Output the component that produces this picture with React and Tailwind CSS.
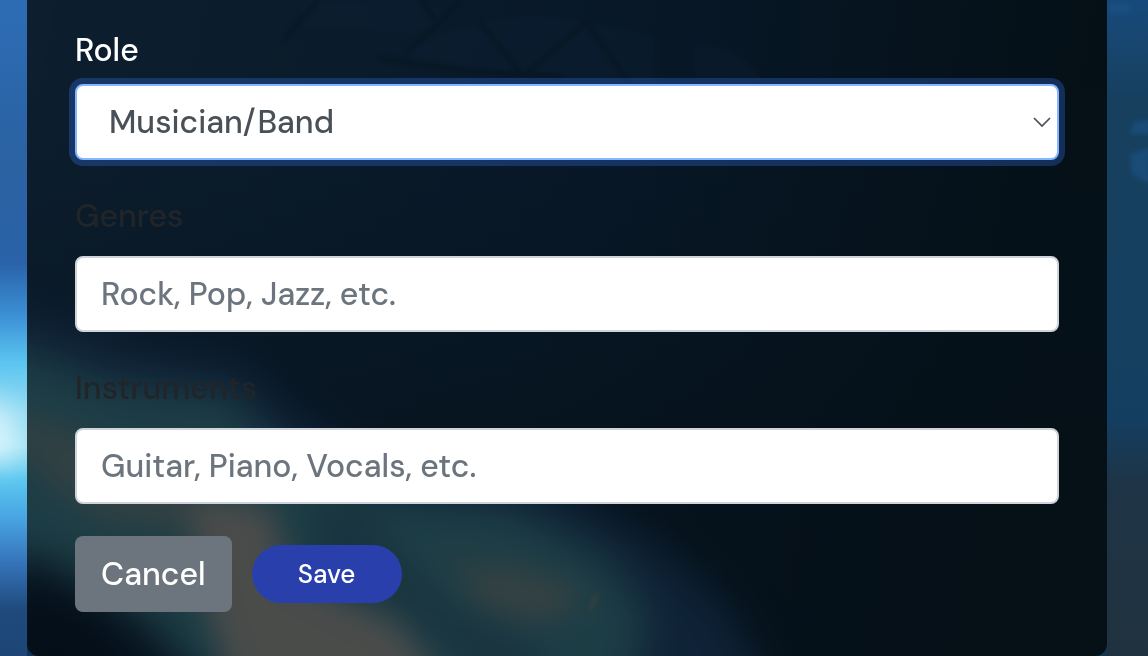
function StageBackdrop() {
  return (
    <svg
      className="absolute inset-0 size-full"
      viewBox="0 0 1148 656"
      preserveAspectRatio="xMidYMid slice"
      colorInterpolationFilters="sRGB"
      aria-hidden="true"
    >
      <defs>
        <linearGradient id="night" x1="0" y1="0" x2="1" y2="0.1">
          <stop offset="0" stopColor="#2e6aa8" />
          <stop offset="0.05" stopColor="#2b659c" />
          <stop offset="0.25" stopColor="#255e92" />
          <stop offset="0.5" stopColor="#1d548a" />
          <stop offset="0.75" stopColor="#15446a" />
          <stop offset="0.95" stopColor="#12374c" />
        </linearGradient>
        <linearGradient id="dusk" x1="0" y1="0" x2="0" y2="1">
          <stop offset="0.1" stopColor="#154468" stopOpacity="0" />
          <stop offset="0.75" stopColor="#13364f" stopOpacity="0.6" />
        </linearGradient>
        <linearGradient id="rightEdge" x1="0" y1="0" x2="0" y2="1">
          <stop offset="0" stopColor="#174a7c" />
          <stop offset="0.15" stopColor="#17405f" />
          <stop offset="0.5" stopColor="#16405f" />
          <stop offset="0.64" stopColor="#143e60" />
          <stop offset="0.74" stopColor="#1e3446" />
          <stop offset="1" stopColor="#20323f" />
        </linearGradient>
        <linearGradient id="leftEdge" x1="0" y1="0" x2="0" y2="1">
          <stop offset="0" stopColor="#2d6cb4" />
          <stop offset="0.25" stopColor="#2a62a2" />
          <stop offset="0.4" stopColor="#2a62a8" />
          <stop offset="0.48" stopColor="#3b8fd4" />
          <stop offset="0.55" stopColor="#5ac4f0" />
          <stop offset="0.63" stopColor="#96dcf4" />
          <stop offset="0.68" stopColor="#a0e2f4" />
          <stop offset="0.73" stopColor="#5cc8f0" />
          <stop offset="0.79" stopColor="#48a4e2" />
          <stop offset="0.86" stopColor="#3572b8" />
          <stop offset="0.93" stopColor="#1f4a7c" />
          <stop offset="1" stopColor="#1d4676" />
        </linearGradient>
        <filter id="blurSmall" x="-50%" y="-50%" width="200%" height="200%">
          <feGaussianBlur stdDeviation="2" />
        </filter>
        <filter id="blurMedium" x="-50%" y="-50%" width="200%" height="200%">
          <feGaussianBlur stdDeviation="15" />
        </filter>
        <filter id="blurLarge" x="-50%" y="-50%" width="200%" height="200%">
          <feGaussianBlur stdDeviation="20" />
        </filter>
      </defs>
      <rect width="1148" height="656" fill="url(#night)" />
      <rect width="1148" height="656" fill="url(#dusk)" />

      <g filter="url(#blurSmall)">
        <path d="M300 0 L420 0 Q470 20 410 34 L300 25Z M412 46 Q490 10 560 18 L655 36 L655 84 L412 62Z M695 45 Q740 45 760 78 L695 78Z" fill="#2a6bac" opacity=".35" />
        <path d="M284 40 L318 0 M420 0 L436 20 M462 0 L408 52 M480 22 L520 72 M528 72 L586 22 L630 84 M380 58 Q470 74 560 76" fill="none" stroke="#154566" strokeWidth="5" opacity=".6" />
      </g>

      <g filter="url(#blurLarge)">
        <path d="M-40 300 L60 320 L150 350 L240 365 L300 420 L400 475 L560 490 L650 540 L720 600 L790 720 L300 720 L180 640 L60 560 L-40 560Z" fill="#3274b8" />
        <path d="M-40 345 L20 350 L120 385 L230 395 L300 470 L380 495 L510 505 L610 560 L650 620 L620 720 L240 720 L140 615 L50 560 L-40 550Z" fill="#62cce8" />
        <path d="M-40 670 L20 585 L80 610 L160 700 L-40 740Z" fill="#10365a" />
      </g>
      <g filter="url(#blurMedium)">
        <path d="M0 410 L60 425 L150 470 L240 500 L240 540 L100 520 L50 485Z" fill="#e8e4da" opacity=".5" />
        <path d="M190 500 L270 505 L290 575 L400 625 L460 710 L240 710 L205 600Z" fill="#fffffa" opacity=".95" />
        <path d="M470 575 L510 565 L585 590 L570 612 L530 622 L470 600Z" fill="#e8e4dc" opacity=".6" />
        <path d="M430 555 L480 560 L500 580 L460 580Z" fill="#e0dccc" opacity=".35" />
        <path d="M310 510 L360 500 L390 540 L440 600 L530 640 L560 690 L480 680 L400 610 L320 570Z" fill="#4a94c2" opacity=".5" />
        <path d="M15 635 L45 605 L90 620 L150 700 L10 690Z" fill="#0f2f50" opacity=".6" />
      </g>
      <g filter="url(#blurSmall)">
        <path d="M588 614 Q590 598 598 591 Q600 602 588 614Z" fill="#dcd8b8" opacity=".6" />
      </g>

      <rect width="27" height="656" fill="url(#leftEdge)" />
      <g filter="url(#blurMedium)">
        <path d="M-20 405 L0 400 L20 455 L-20 465Z" fill="#f2fdff" opacity=".85" />
      </g>
      <rect x="1107" width="41" height="656" fill="url(#rightEdge)" />
      <g filter="url(#blurSmall)" fill="#1d5488" opacity=".6">
        <path d="M1110 4 L1128 4 L1132 12 L1110 14Z" />
        <path d="M1134 122 L1150 120 L1150 134 L1130 134Z" />
        <path d="M1130 154 L1150 148 L1150 184 L1132 174Z" />
      </g>
    </svg>
  );
}

const labelClass = "block leading-12";
const inputClass =
  "block h-19 w-full rounded-lg border-2 border-[#ced4da] bg-white px-6 text-[#495057] outline-none placeholder:text-[#6c757d] placeholder:opacity-100";

function TextField({ id, label, placeholder }) {
  return (
    <div className="flex flex-col gap-4">
      <label htmlFor={id} className={`${labelClass} text-[#212529]`}>
        {label}
      </label>
      <input id={id} type="text" placeholder={placeholder} className={inputClass} />
    </div>
  );
}

export default function App() {
  return (
    <div className="relative min-h-screen overflow-hidden bg-[#0c3347] pr-[41px] pl-[27px] font-['DM_Sans',Inter,sans-serif] text-[32px] font-medium">
      <StageBackdrop />
      <form
        className="relative flex flex-col gap-8 rounded-b-xl bg-black/70 px-12 pt-[26px] pb-11"
        onSubmit={(event) => event.preventDefault()}
      >
        <div className="flex flex-col gap-[10px]">
          <label htmlFor="role" className={`${labelClass} text-white`}>
            Role
          </label>
          <div className="relative">
            <select
              id="role"
              defaultValue="musician"
              className="block h-19 w-full appearance-none rounded-lg border-2 border-[#86b7fe] bg-white pr-12 pl-8 text-[#495057] ring-6 ring-[#3b7bff]/28 outline-none"
            >
              <option value="musician">Musician/Band</option>
              <option value="venue">Venue</option>
            </select>
            <svg
              className="pointer-events-none absolute top-8 right-2 h-3 w-[18px]"
              viewBox="0 0 18 12"
              fill="none"
              stroke="#495057"
              strokeWidth="1.7"
              aria-hidden="true"
            >
              <path d="M1 2 L9 10 L17 2" />
            </svg>
          </div>
        </div>
        <TextField id="genres" label="Genres" placeholder="Rock, Pop, Jazz, etc." />
        <TextField id="instruments" label="Instruments" placeholder="Guitar, Piano, Vocals, etc." />
        <div className="flex items-center gap-5">
          <button type="button" className="h-19 rounded-lg bg-[#6c757d] px-[26px] text-white">
            Cancel
          </button>
          <button type="submit" className="h-[58px] w-[150px] rounded-full bg-[#2940ac] text-[26px] text-white">
            Save
          </button>
        </div>
      </form>
    </div>
  );
}
